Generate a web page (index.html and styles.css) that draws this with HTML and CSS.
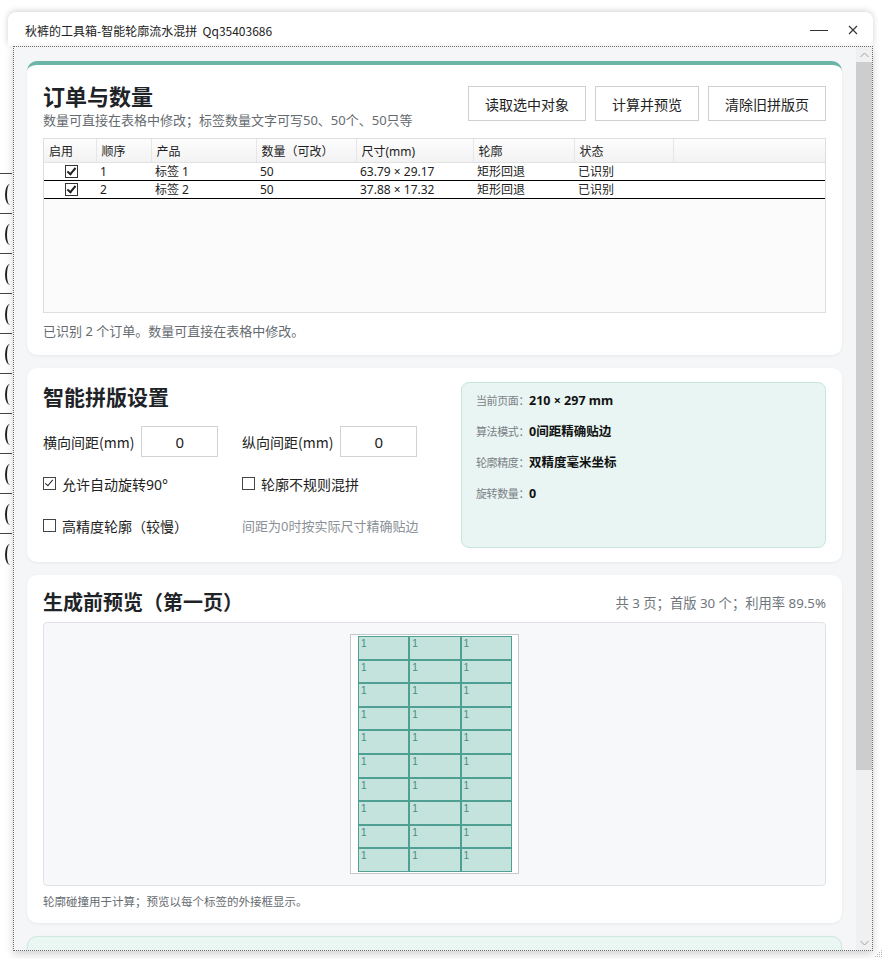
FILE: index.html
```html
<!DOCTYPE html>
<html lang="zh-CN">
<head>
    <meta charset="UTF-8">
    <meta name="viewport" content="width=device-width, initial-scale=1.0">
    <title>秋裤的工具箱-智能轮廓流水混拼</title>
    <link rel="stylesheet" href="styles.css">
</head>
<body>
<div class="desk">
    <!-- the document window lying behind the tool -->
    <div class="behind">
        <div class="behind-row"><span class="arc"></span></div>
        <div class="behind-row"><span class="arc"></span></div>
        <div class="behind-row"><span class="arc"></span></div>
        <div class="behind-row"><span class="arc"></span></div>
        <div class="behind-row"><span class="arc"></span></div>
        <div class="behind-row"><span class="arc"></span></div>
        <div class="behind-row"><span class="arc"></span></div>
        <div class="behind-row"><span class="arc"></span></div>
        <div class="behind-row"><span class="arc"></span></div>
        <div class="behind-row"><span class="arc"></span></div>
    </div>

    <div class="window">
        <div class="titlebar">
            <span class="title">秋裤的工具箱-智能轮廓流水混拼&nbsp;&nbsp;Qq35403686</span>
            <span class="win-btn">
                <svg width="18" height="10" viewBox="0 0 18 10"><line x1="0" y1="5.5" x2="18" y2="5.5" stroke="#333" stroke-width="1"/></svg>
            </span>
            <span class="win-btn">
                <svg width="10" height="10" viewBox="0 0 10 10"><path d="M1 1 L9 9 M9 1 L1 9" stroke="#333" stroke-width="1.1" fill="none"/></svg>
            </span>
        </div>

        <div class="client">
            <div class="pane">
                <section class="card card-orders">
                    <div class="card-head">
                        <div>
                            <h1>订单与数量</h1>
                            <p class="sub">数量可直接在表格中修改；标签数量文字可写50、50个、50只等</p>
                        </div>
                        <div class="actions">
                            <button>读取选中对象</button>
                            <button>计算并预览</button>
                            <button>清除旧拼版页</button>
                        </div>
                    </div>

                    <div class="grid">
                        <table>
                            <colgroup>
                                <col style="width:52px">
                                <col style="width:55px">
                                <col style="width:105px">
                                <col style="width:100px">
                                <col style="width:117px">
                                <col style="width:101px">
                                <col style="width:99px">
                                <col>
                            </colgroup>
                            <thead>
                                <tr>
                                    <th>启用</th>
                                    <th>顺序</th>
                                    <th>产品</th>
                                    <th>数量（可改）</th>
                                    <th>尺寸(mm)</th>
                                    <th>轮廓</th>
                                    <th>状态</th>
                                    <th class="filler"></th>
                                </tr>
                            </thead>
                            <tbody>
                                <tr>
                                    <td class="center"><span class="cb on"></span></td>
                                    <td>1</td>
                                    <td>标签 1</td>
                                    <td>50</td>
                                    <td>63.79 × 29.17</td>
                                    <td>矩形回退</td>
                                    <td>已识别</td>
                                    <td></td>
                                </tr>
                                <tr>
                                    <td class="center"><span class="cb on"></span></td>
                                    <td>2</td>
                                    <td>标签 2</td>
                                    <td>50</td>
                                    <td>37.88 × 17.32</td>
                                    <td>矩形回退</td>
                                    <td>已识别</td>
                                    <td></td>
                                </tr>
                            </tbody>
                        </table>
                    </div>

                    <p class="status">已识别 2 个订单。数量可直接在表格中修改。</p>
                </section>

                <section class="card card-settings">
                    <div class="settings">
                        <h2>智能拼版设置</h2>
                        <div class="options">
                            <div class="field">
                                <label>横向间距(mm)</label>
                                <input type="text" value="0">
                            </div>
                            <div class="field">
                                <label>纵向间距(mm)</label>
                                <input type="text" value="0">
                            </div>
                            <div class="check"><span class="box on"></span>允许自动旋转90°</div>
                            <div class="check"><span class="box"></span>轮廓不规则混拼</div>
                            <div class="check"><span class="box"></span>高精度轮廓（较慢）</div>
                            <div class="hint">间距为0时按实际尺寸精确贴边</div>
                        </div>
                    </div>
                    <div class="facts">
                        <div><span class="k">当前页面：</span><b>210 × 297 mm</b></div>
                        <div><span class="k">算法模式：</span><b>0间距精确贴边</b></div>
                        <div><span class="k">轮廓精度：</span><b>双精度毫米坐标</b></div>
                        <div><span class="k">旋转数量：</span><b>0</b></div>
                    </div>
                </section>

                <section class="card card-preview">
                    <div class="preview-head">
                        <h2>生成前预览（第一页）</h2>
                        <span class="summary">共 3 页；首版 30 个；利用率 89.5%</span>
                    </div>
                    <div class="stage">
                        <div class="sheet">
                            <div class="labels" id="labels"></div>
                        </div>
                    </div>
                    <p class="note">轮廓碰撞用于计算；预览以每个标签的外接框显示。</p>
                </section>

                <section class="card card-next"></section>
            </div>

            <div class="vscroll">
                <span class="arrow">
                    <svg width="9" height="6" viewBox="0 0 9 6"><path d="M0.5 5 L4.5 1 L8.5 5" stroke="#a0a0a0" stroke-width="1" fill="none"/></svg>
                </span>
                <div class="track"><div class="thumb"></div></div>
                <span class="arrow">
                    <svg width="9" height="6" viewBox="0 0 9 6"><path d="M0.5 1 L4.5 5 L8.5 1" stroke="#a0a0a0" stroke-width="1" fill="none"/></svg>
                </span>
            </div>
        </div>

        <svg class="grip" width="10" height="10" viewBox="0 0 10 10">
            <g fill="#b8b8b8">
                <rect x="8" y="2" width="1" height="1"/>
                <rect x="6" y="4" width="1" height="1"/><rect x="8" y="4" width="1" height="1"/>
                <rect x="4" y="6" width="1" height="1"/><rect x="6" y="6" width="1" height="1"/><rect x="8" y="6" width="1" height="1"/>
                <rect x="2" y="8" width="1" height="1"/><rect x="4" y="8" width="1" height="1"/><rect x="6" y="8" width="1" height="1"/><rect x="8" y="8" width="1" height="1"/>
            </g>
        </svg>
    </div>
</div>

<script>
    // first page: 3 columns x 10 rows of label boxes
    var labels = document.getElementById('labels');
    for (var i = 0; i < 30; i++) {
        var cell = document.createElement('div');
        cell.className = 'label';
        cell.textContent = '1';
        labels.appendChild(cell);
    }
</script>
</body>
</html>
```

FILE: styles.css
```css
body {
    margin: 0;
    background: #fff;
    font-family: "Noto Sans", "Noto Sans CJK SC", sans-serif;
    color: #222;
}
.desk {
    position: relative;
    width: 885px;
    height: 959px;
    overflow: hidden;
}

/* window behind */
.behind {
    position: absolute;
    left: 0;
    top: 173px;
    width: 12px;
    overflow: hidden;
}
.behind-row {
    height: 40px;
    border-top: 1px solid #444;
    padding: 10px 0 0 5px;
    box-sizing: border-box;
}
.arc {
    display: block;
    width: 10px;
    height: 21px;
    border-left: 2px solid #222;
    border-radius: 50% 0 0 50%;
    box-sizing: border-box;
}

/* tool window */
.window {
    position: absolute;
    left: 8px;
    top: 12px;
    width: 865px;
    height: 938px;
}
.titlebar {
    display: flex;
    align-items: center;
    height: 34px;
    background: #fff;
    border-radius: 8px 8px 0 0;
    box-shadow: 0 -1px 6px rgba(0, 0, 0, 0.18);
    padding: 0 3px 0 17px;
}
.title {
    flex: 1;
    font-family: "Noto Sans CJK SC", sans-serif;
    font-size: 12px;
    color: #222;
    padding-top: 2px;
}
.win-btn {
    display: flex;
    align-items: center;
    justify-content: center;
    width: 34px;
    height: 34px;
    padding-top: 2px;
}
.client {
    display: flex;
    margin-left: 5px;
    height: 903px;
    border: 1px dotted #666;
    background: #f4f6f8;
    box-shadow: 0 3px 8px rgba(0, 0, 0, 0.18);
    overflow: hidden;
}
.pane {
    flex: 1;
    display: flex;
    flex-direction: column;
    gap: 13px;
    padding: 14px 14px 0 13px;
}
.vscroll {
    display: flex;
    flex-direction: column;
    width: 16px;
    background: #f0f0f0;
}
.arrow {
    display: flex;
    align-items: center;
    justify-content: center;
    height: 15px;
    flex: none;
}
.track {
    flex: 1;
}
.thumb {
    height: 708px;
    background: #cdcdcd;
}
.grip {
    position: absolute;
    right: -10px;
    bottom: -8px;
}

/* cards */
.card {
    background: #fff;
    border-radius: 10px;
    box-shadow: 0 1px 3px rgba(0, 0, 0, 0.06);
    padding: 0 16px;
    flex: none;
}
h1, h2 {
    margin: 0;
    font-family: "Noto Sans CJK SC", sans-serif;
    font-weight: 700;
    color: #1e2328;
}
h1 {
    font-size: 22px;
    line-height: 28px;
}
h2 {
    font-size: 20px;
    line-height: 28px;
}
.card-orders {
    border-top: 4px solid #6bb5a7;
    padding-top: 16px;
    padding-bottom: 15px;
}
.card-head {
    display: flex;
    justify-content: space-between;
    align-items: center;
}
.sub {
    margin: 2px 0 0;
    font-size: 13px;
    line-height: 18px;
    color: #666b70;
}
.actions {
    display: flex;
    gap: 9px;
    margin-top: -3px;
}
button {
    height: 35px;
    padding: 0 16px;
    background: #fff;
    border: 1px solid #cfcfcf;
    font-family: "Noto Sans CJK SC", sans-serif;
    font-size: 14px;
    color: #222;
}

/* order grid */
.grid {
    margin-top: 9px;
    height: 173px;
    border: 1px solid #dcdfe2;
    background: #fbfbfc;
}
table {
    width: 100%;
    border-collapse: collapse;
    table-layout: fixed;
    font-size: 12px;
}
th {
    height: 23px;
    padding: 0 5px;
    text-align: left;
    font-weight: normal;
    color: #222;
    background: linear-gradient(#fdfdfd, #f2f2f2);
    border-right: 1px solid #e6e6e6;
    border-bottom: 1px solid #e2e2e2;
    white-space: nowrap;
}
th.filler {
    border-right: none;
}
td {
    height: 17px;
    padding: 0 4px;
    line-height: 17px;
    background: #fff;
    border-bottom: 1px solid #000;
    white-space: nowrap;
}
td.center {
    text-align: center;
    padding: 0 0 0 2px;
}
.cb {
    display: inline-block;
    position: relative;
    width: 11px;
    height: 11px;
    border: 1px solid #333;
    background: #fff;
    vertical-align: -2px;
}
.cb.on::after, .box.on::after {
    content: "";
    position: absolute;
    left: 3px;
    top: 0;
    width: 3px;
    height: 7px;
    border: solid #222;
    border-width: 0 2px 2px 0;
    transform: rotate(40deg);
}
.status {
    margin: 9px 0 0;
    font-size: 13px;
    line-height: 18px;
    color: #666b70;
}

/* layout settings */
.card-settings {
    display: flex;
    gap: 30px;
    padding-top: 14px;
    padding-bottom: 14px;
}
.settings {
    flex: 1;
}
.settings h2 {
    font-size: 21px;
}
.options {
    display: grid;
    grid-template-columns: 199px 1fr;
    grid-auto-rows: 31px;
    row-gap: 11px;
    margin-top: 16px;
    font-size: 14px;
}
.field {
    display: flex;
    align-items: center;
    gap: 7px;
}
.field label {
    font-family: "Noto Sans CJK SC", sans-serif;
    color: #222;
}
input[type="text"] {
    width: 77px;
    height: 31px;
    box-sizing: border-box;
    border: 1px solid #d0d3d6;
    text-align: center;
    font-family: "Noto Sans", sans-serif;
    font-size: 15px;
    color: #222;
}
.check {
    display: flex;
    align-items: center;
    gap: 6px;
    color: #222;
}
.box {
    position: relative;
    width: 11px;
    height: 11px;
    border: 1px solid #444;
    flex: none;
}
.box.on::after {
    left: 3px;
    top: 0;
    width: 3px;
    height: 7px;
    border-width: 0 1.5px 1.5px 0;
}
.hint {
    display: flex;
    align-items: center;
    font-size: 13px;
    color: #8a9096;
}
.facts {
    width: 335px;
    padding: 2px 14px;
    height: 160px;
    background: #e8f5f2;
    border: 1px solid #c8e4dd;
    border-radius: 8px;
    font-size: 12.5px;
    line-height: 31px;
}
.facts .k {
    font-size: 11px;
    letter-spacing: -0.4px;
    color: #7b8187;
}
.facts b {
    color: #111;
}

/* preview */
.card-preview {
    padding-top: 13px;
    padding-bottom: 13px;
}
.preview-head {
    display: flex;
    justify-content: space-between;
    align-items: center;
}
.summary {
    font-size: 13.3px;
    color: #70767c;
}
.stage {
    display: flex;
    align-items: center;
    justify-content: center;
    margin-top: 6px;
    height: 262px;
    background: #f7f8fa;
    border: 1px solid #dfe2e6;
    border-radius: 4px;
}
.sheet {
    width: 167px;
    height: 238px;
    background: #fff;
    border: 1px solid #c5c9ce;
}
.labels {
    display: grid;
    grid-template-columns: repeat(3, 51.3px);
    grid-template-rows: repeat(10, 23.6px);
    margin: 1px 0 0 7px;
}
.label {
    box-sizing: border-box;
    background: #c3e3dc;
    border: 1px solid #4f9f92;
    font-family: "Liberation Sans", sans-serif;
    font-size: 10px;
    line-height: 1;
    padding: 2px 0 0 2px;
    color: #4b8c82;
}
.note {
    margin: 8px 0 0;
    font-size: 11.5px;
    line-height: 16px;
    color: #666b70;
}
.card-next {
    height: 60px;
    background: #e9f6f2;
    border: 1px solid #cfe7e0;
}
```
